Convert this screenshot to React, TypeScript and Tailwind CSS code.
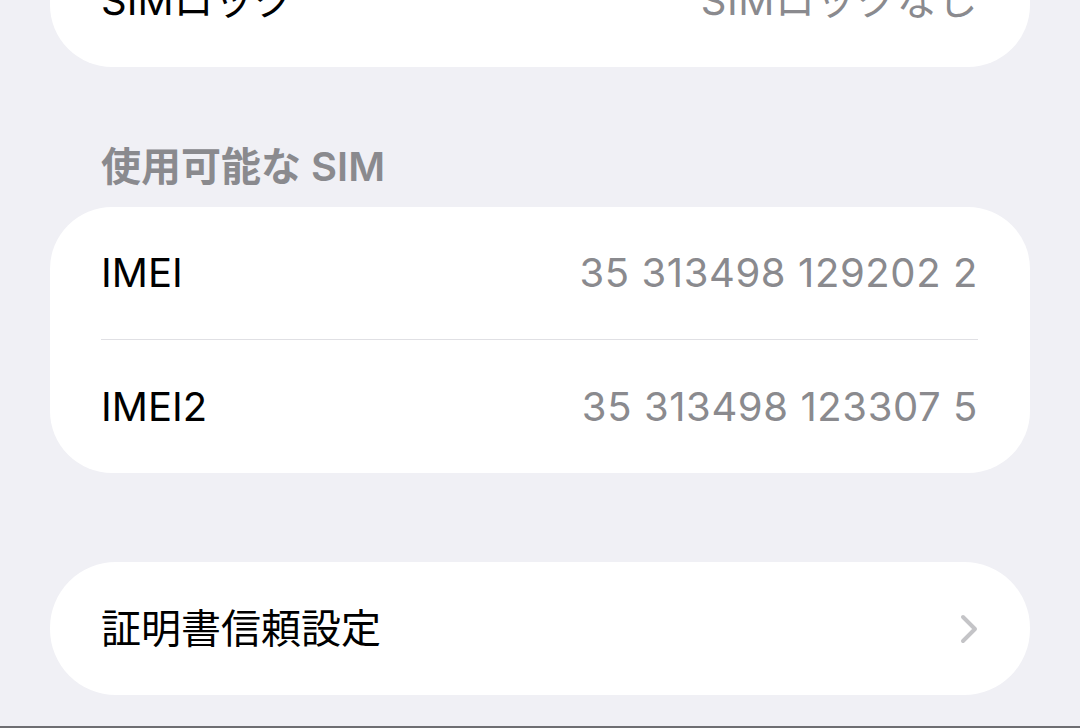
import React from "react";

const font = { fontFamily: '"Inter", "Noto Sans CJK JP", sans-serif' };

function ChevronRight() {
  return (
    <svg width="18" height="30" viewBox="0 0 18 30" fill="none" className="shrink-0">
      <path d="M3 3 L15 15 L3 27" stroke="#c4c4c7" strokeWidth="4" strokeLinecap="round" strokeLinejoin="round" />
    </svg>
  );
}

function Row({ label, value, divider, chevron }: { label: string; value?: string; divider?: boolean; chevron?: boolean }) {
  return (
    <div className="h-[133px] pl-[51px] pr-[52px]">
      <div className={`h-full flex items-center justify-between ${divider ? "border-b border-[#e0e0e4]" : ""}`}>
        <span className="text-[40px] leading-[48px] text-black">{label}</span>
        {value && <span className="text-[40px] leading-[48px] tracking-[0.6px] text-[#8a8a8e]">{value}</span>}
        {chevron && <ChevronRight />}
      </div>
    </div>
  );
}

export default function App() {
  return (
    <div className="h-[728px] w-[1080px] overflow-hidden bg-[#f0f0f5] flex flex-col" style={font}>
      {/* SIM lock card, scrolled partly out of view */}
      <div className="mx-[50px] -mt-[66px] bg-white rounded-[62px] overflow-hidden shrink-0">
        <Row label="SIMロック" value="SIMロックなし" />
      </div>

      <div className="pt-[76px] pb-[16px] px-[101px] shrink-0">
        <span className="text-[40px] leading-[48px] font-semibold text-[#8a8a8e]">使用可能な SIM</span>
      </div>

      <div className="mx-[50px] bg-white rounded-[62px] overflow-hidden shrink-0">
        <Row label="IMEI" value="35 313498 129202 2" divider />
        <Row label="IMEI2" value="35 313498 123307 5" />
      </div>

      <div className="mx-[50px] mt-[89px] bg-white rounded-[66px] overflow-hidden shrink-0">
        <Row label="証明書信頼設定" chevron />
      </div>

      <div className="flex-1" />
      <div className="h-[2px] bg-[#6e6e72] shrink-0" />
    </div>
  );
}
